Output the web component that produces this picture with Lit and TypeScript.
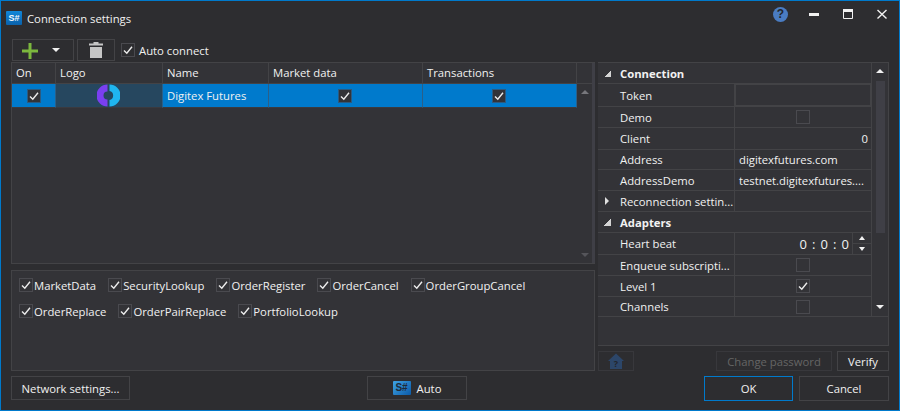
import { LitElement, css, html, nothing } from "lit";
import { customElement } from "lit/decorators.js";

const tick = html`<svg viewBox="0 0 14 14" width="14" height="14"><path d="M3 7.5 L5.8 10.2 L11 3.8" fill="none" stroke="#ececec" stroke-width="1.4"/></svg>`;

const box = (on: boolean, extra = "") =>
  html`<span class="box ${extra}">${on ? tick : nothing}</span>`;

const arrow = (dir: "up" | "down", cls = "") =>
  html`<span class="arrow ${dir} ${cls}"></span>`;

const rowOne = ["MarketData", "SecurityLookup", "OrderRegister", "OrderCancel", "OrderGroupCancel"];
const rowTwo = ["OrderReplace", "OrderPairReplace", "PortfolioLookup"];

type Prop =
  | { kind: "group"; name: string }
  | { kind: "text"; name: string; value: string; end?: boolean }
  | { kind: "check"; name: string; on: boolean }
  | { kind: "token"; name: string }
  | { kind: "time"; name: string }
  | { kind: "sub"; name: string };

const props: Prop[] = [
  { kind: "group", name: "Connection" },
  { kind: "token", name: "Token" },
  { kind: "check", name: "Demo", on: false },
  { kind: "text", name: "Client", value: "0", end: true },
  { kind: "text", name: "Address", value: "digitexfutures.com" },
  { kind: "text", name: "AddressDemo", value: "testnet.digitexfutures...." },
  { kind: "sub", name: "Reconnection settin..." },
  { kind: "group", name: "Adapters" },
  { kind: "time", name: "Heart beat" },
  { kind: "check", name: "Enqueue subscripti...", on: false },
  { kind: "check", name: "Level 1", on: true },
  { kind: "check", name: "Channels", on: false },
];

@customElement("app-root")
export class AppRoot extends LitElement {
  private renderValue(p: Prop) {
    switch (p.kind) {
      case "token":
        return html`<div class="val"><span class="token"></span></div>`;
      case "check":
        return html`<div class="val center">${box(p.on)}</div>`;
      case "text":
        return html`<div class="val pad ${p.end ? "end" : ""}">${p.value}</div>`;
      case "time":
        return html`<div class="val time">
          <span class="clock">0 : 0 : 0</span>
          <span class="spin">
            <span class="half top">${arrow("up", "white")}</span>
            <span class="half">${arrow("down", "white")}</span>
          </span>
        </div>`;
      default:
        return html`<div class="val"></div>`;
    }
  }

  private renderProp(p: Prop) {
    if (p.kind === "group") {
      return html`<div class="group">${arrow("down", "corner")}<b>${p.name}</b></div>`;
    }
    return html`<div class="name">
        ${p.kind === "sub" ? html`<span class="expand"></span>` : nothing}${p.name}
      </div>
      ${this.renderValue(p)}`;
  }

  protected render() {
    return html`
      <div class="win">
        <header>
          <span class="logo">S#</span>
          <span class="caption">Connection settings</span>
          <span class="help">?</span>
          <svg class="wb" viewBox="0 0 90 20" width="90" height="20">
            <rect x="0" y="9" width="10" height="3" fill="#f1f1f1" />
            <path d="M34.5 5.5h9v9h-9z" fill="none" stroke="#f1f1f1" />
            <rect x="34" y="5" width="10" height="3" fill="#f1f1f1" />
            <path d="M68.5 6l9 8.5M77.5 6l-9 8.5" stroke="#f1f1f1" stroke-width="1.4" />
          </svg>
        </header>

        <div class="body">
          <div class="left">
            <div class="toolbar">
              <button class="tool add">
                <svg viewBox="0 0 16 16" width="16" height="16"><path d="M6.5 0h3v6.5H16v3H9.5V16h-3V9.5H0v-3h6.5z" fill="#7cb83e"/></svg>
                <span class="caret"></span>
              </button>
              <button class="tool del">
                <svg viewBox="0 0 14 16" width="14" height="16"><path d="M4.5 0h5v1.5H14V3.5H0V1.5h4.5zM1 5h12v11H1z" fill="#c6c6c6"/></svg>
              </button>
              <label class="check auto">${box(true)}Auto connect</label>
            </div>

            <div class="table">
              <div class="tmain">
                <div class="thead">
                  <span>On</span><span>Logo</span><span>Name</span><span>Market data</span><span>Transactions</span>
                </div>
                <div class="trow">
                  <span class="c">${box(true, "dark")}</span>
                  <span class="c shift logocell">
                    <svg viewBox="0 0 23 23" width="23" height="23">
                      <path d="M10.5 0.5a11 11 0 0 0 0 22v-7a4 4 0 0 1 0-8z" fill="#7a3ff0"/>
                      <path d="M12.5 0.5a11 11 0 0 1 0 22v-6.5a4.6 4.6 0 0 0 0-9z" fill="#1fb5ef"/>
                    </svg>
                  </span>
                  <span class="n">Digitex Futures</span>
                  <span class="c shift">${box(true, "dark")}</span>
                  <span class="c shift">${box(true, "dark")}</span>
                </div>
              </div>
              <div class="tscroll">
                <div class="tscroll-head"></div>
                <div class="tscroll-track">${arrow("up", "dim")}${arrow("down", "dim")}</div>
              </div>
            </div>

            <div class="filters">
              <div class="frow">
                ${rowOne.map((t) => html`<label class="check">${box(true)}${t}</label>`)}
              </div>
              <div class="frow">
                ${rowTwo.map((t) => html`<label class="check">${box(true)}${t}</label>`)}
              </div>
            </div>
          </div>

          <div class="right">
            <div class="pgrid">
              <div class="pmain">
                <div class="plist">${props.map((p) => this.renderProp(p))}</div>
                <div class="pscroll">
                  ${arrow("up", "white")}
                  <span class="thumb"></span>
                  ${arrow("down", "white")}
                </div>
              </div>
              <div class="pdesc"></div>
            </div>
            <div class="pbuttons">
              <button class="home">
                <svg viewBox="0 0 16 16" width="16" height="16">
                  <path d="M8 0.5 L16 8 H14 V16 H2 V8 H0 Z" fill="#2c4669"/>
                  <text x="8" y="13.5" text-anchor="middle" font-size="9" font-weight="700" fill="#22252c">?</text>
                </svg>
              </button>
              <span class="grow"></span>
              <button class="change" disabled>Change password</button>
              <button class="verify">Verify</button>
            </div>
          </div>
        </div>

        <footer>
          <button class="network">Network settings...</button>
          <button class="autobtn"><span class="logo big">S#</span>Auto</button>
          <div class="actions">
            <button class="ok">OK</button>
            <button class="cancel">Cancel</button>
          </div>
        </footer>
      </div>
    `;
  }

  static styles = css`
    :host {
      display: block;
      width: 900px;
      height: 411px;
    }
    * {
      box-sizing: border-box;
    }
    .win {
      width: 900px;
      height: 411px;
      border: 1px solid #007acc;
      background: #2d2d30;
      color: #f1f1f1;
      font-family: "Open Sans", "Noto Sans", sans-serif;
      font-size: 11.3px;
      display: flex;
      flex-direction: column;
      overflow: hidden;
    }
    button {
      font: inherit;
      color: inherit;
      background: #2d2d30;
      border: 1px solid #434346;
      padding: 0;
      display: flex;
      align-items: center;
      justify-content: center;
    }

    header {
      height: 35px;
      flex: none;
      display: flex;
      align-items: center;
      padding-left: 5px;
    }
    .logo {
      width: 16px;
      height: 14px;
      margin-top: -2px;
      background: linear-gradient(180deg, #1186d8, #0a62ac);
      border-radius: 1px;
      color: #f4f8fc;
      font-family: "Liberation Sans", sans-serif;
      font-size: 9px;
      font-weight: 700;
      line-height: 14px;
      text-align: center;
    }
    .logo.big {
      width: 18px;
      height: 14px;
      margin: 0 6px 0 0;
      background: linear-gradient(135deg, #3fa3e4, #0b5aa8);
      color: #1f2a38;
      font-size: 10px;
    }
    .caption {
      margin-left: 5px;
    }
    .help {
      margin-left: auto;
      width: 15px;
      height: 15px;
      margin-top: -8px;
      border-radius: 50%;
      background: #4a7cc2;
      color: #23262c;
      font-family: "Liberation Sans", sans-serif;
      font-size: 12px;
      font-weight: 700;
      line-height: 15px;
      text-align: center;
    }
    .wb {
      margin: -9px 0 0 21px;
      flex: none;
    }

    .body {
      flex: 1;
      display: flex;
      gap: 3px;
      padding: 3px 10px 0;
      min-height: 0;
    }
    .left {
      width: 584px;
      display: flex;
      flex-direction: column;
    }
    .toolbar {
      height: 23px;
      flex: none;
      display: flex;
      gap: 3px;
      align-items: flex-start;
      padding-left: 1px;
    }
    .tool {
      height: 22px;
      background: #2d2d30;
    }
    .add {
      width: 62px;
      justify-content: flex-start;
      padding: 1px 0 0 9px;
    }
    .caret {
      margin: -1px 0 0 14px;
      border: 4px solid transparent;
      border-top: 4px solid #f1f1f1;
      border-bottom: 0;
    }
    .del {
      width: 38px;
    }
    .check {
      display: inline-flex;
      align-items: center;
      gap: 1px;
      white-space: nowrap;
    }
    .auto {
      height: 22px;
      margin-left: 3px;
      gap: 4px;
    }
    .box {
      width: 14px;
      height: 14px;
      flex: none;
      border: 1px solid #4a4a4f;
      display: inline-flex;
      align-items: center;
      justify-content: center;
    }
    .box svg {
      flex: none;
    }
    .box.dark {
      background: #333337;
      border-color: #2b5a80;
    }

    .table {
      height: 202px;
      flex: none;
      display: flex;
      background: #333337;
      border: 1px solid #434346;
      border-right: 0;
    }
    .tmain {
      width: 565px;
      flex: none;
    }
    .thead,
    .trow {
      display: grid;
      grid-template-columns: 44px 107px 106px 154px 154px;
    }
    .thead {
      height: 21px;
      border-bottom: 1px solid #434346;
      align-items: stretch;
    }
    .thead span {
      padding-left: 4px;
      line-height: 20px;
      border-right: 1px solid #434346;
    }
    .trow {
      height: 23px;
      background: #007acc;
      align-items: stretch;
    }
    .trow > span {
      display: flex;
      align-items: center;
      border-bottom: 1px solid #3a3a3f;
      border-right: 1px solid #2b5f88;
    }
    .c {
      justify-content: center;
    }
    .trow > .shift {
      padding-right: 2px;
    }
    .n {
      padding-left: 4px;
    }
    .logocell {
      background: #26475f;
    }
    .tscroll {
      flex: 1;
      display: flex;
      flex-direction: column;
      border-right: 3px solid #3f3f46;
    }
    .tscroll-head {
      height: 21px;
      border-bottom: 1px solid #434346;
    }
    .tscroll-track {
      flex: 1;
      display: flex;
      flex-direction: column;
      align-items: center;
      justify-content: space-between;
      padding: 6px 0;
    }
    .arrow {
      width: 0;
      height: 0;
      border-left: 4px solid transparent;
      border-right: 4px solid transparent;
      flex: none;
    }
    .arrow.up {
      border-bottom: 4px solid #999;
    }
    .arrow.down {
      border-top: 4px solid #999;
    }
    .arrow.white.up {
      border-bottom-color: #f1f1f1;
    }
    .arrow.white.down {
      border-top-color: #f1f1f1;
    }
    .arrow.dim.up {
      border-bottom-color: #77777c;
    }
    .arrow.dim.down {
      border-top-color: #55555a;
    }

    .filters {
      margin-top: 6px;
      height: 101px;
      flex: none;
      background: #333337;
      border: 1px solid #434346;
      padding: 1px 0 0 7px;
    }
    .frow {
      display: flex;
      height: 26px;
      align-items: center;
      gap: 12px;
    }

    .right {
      width: 291px;
      display: flex;
      flex-direction: column;
      padding-top: 23px;
    }
    .pgrid {
      height: 284px;
      flex: none;
      border: 1px solid #434346;
      border-left: 0;
      display: flex;
      flex-direction: column;
      background: #333337;
    }
    .pmain {
      height: 254px;
      flex: none;
      display: flex;
    }
    .plist {
      width: 273px;
      flex: none;
      display: grid;
      grid-template-columns: 137px 136px;
      grid-template-rows: 21px 23px 21px 22px 20px 21px 21px 21px 22px 21px 21px 20px;
    }
    .group,
    .name,
    .val {
      display: flex;
      align-items: center;
      border-bottom: 1px solid #434346;
      min-width: 0;
    }
    .group {
      grid-column: 1 / 3;
      padding-left: 6px;
    }
    .group b {
      margin-left: 9px;
      font-weight: 700;
    }
    .corner.arrow {
      width: 7px;
      height: 7px;
      border: 0;
      background: linear-gradient(135deg, transparent 50%, #d4d4d4 50%);
    }
    .name {
      padding-left: 22px;
      border-right: 1px solid #434346;
      position: relative;
      white-space: nowrap;
    }
    .expand {
      position: absolute;
      left: 7px;
      top: 6px;
      border-left: 4px solid #e0e0e0;
      border-top: 4px solid transparent;
      border-bottom: 4px solid transparent;
    }
    .val.center {
      justify-content: center;
    }
    .val.pad {
      padding: 0 3px 0 4px;
      white-space: nowrap;
    }
    .val.end {
      justify-content: flex-end;
    }
    .token {
      display: block;
      width: 100%;
      height: 100%;
      border: 1px solid #434346;
    }
    .val.time {
      justify-content: flex-end;
    }
    .clock {
      font-size: 13px;
      margin-right: 3px;
      word-spacing: 1.7px;
    }
    .spin {
      width: 19px;
      height: 100%;
      display: flex;
      flex-direction: column;
      border-left: 1px solid #434346;
    }
    .half {
      flex: 1;
      display: flex;
      align-items: center;
      justify-content: center;
    }
    .half.top {
      border-bottom: 1px solid #434346;
    }
    .spin .arrow {
      border-left-width: 3px;
      border-right-width: 3px;
    }
    .pscroll {
      flex: 1;
      display: flex;
      flex-direction: column;
      align-items: center;
      padding: 6px 0 7px;
      border-left: 1px solid #434346;
      border-bottom: 1px solid #434346;
    }
    .thumb {
      width: 9px;
      height: 152px;
      background: #3f3f46;
      margin: 8px 0 auto;
    }
    .pdesc {
      flex: 1;
    }
    .pbuttons {
      display: flex;
      margin-top: 5px;
      height: 20px;
      flex: none;
      gap: 5px;
    }
    .grow {
      flex: 1;
    }
    .home {
      width: 36px;
      border-color: #38383c;
      background: transparent;
    }
    .change {
      width: 116px;
      color: #656565;
      border-color: #38383c;
    }
    .verify {
      width: 52px;
    }

    footer {
      flex: none;
      height: 25px;
      margin: 0 10px 9px;
      display: grid;
      grid-template-columns: 119px 237px 100px 1fr;
    }
    .network {
      grid-column: 1;
      height: 24px;
    }
    .autobtn {
      grid-column: 3;
      height: 24px;
    }
    .actions {
      grid-column: 4;
      display: flex;
      justify-content: flex-end;
      gap: 6px;
    }
    .ok {
      width: 89px;
      border-color: #007acc;
    }
    .cancel {
      width: 90px;
    }
  `;
}
